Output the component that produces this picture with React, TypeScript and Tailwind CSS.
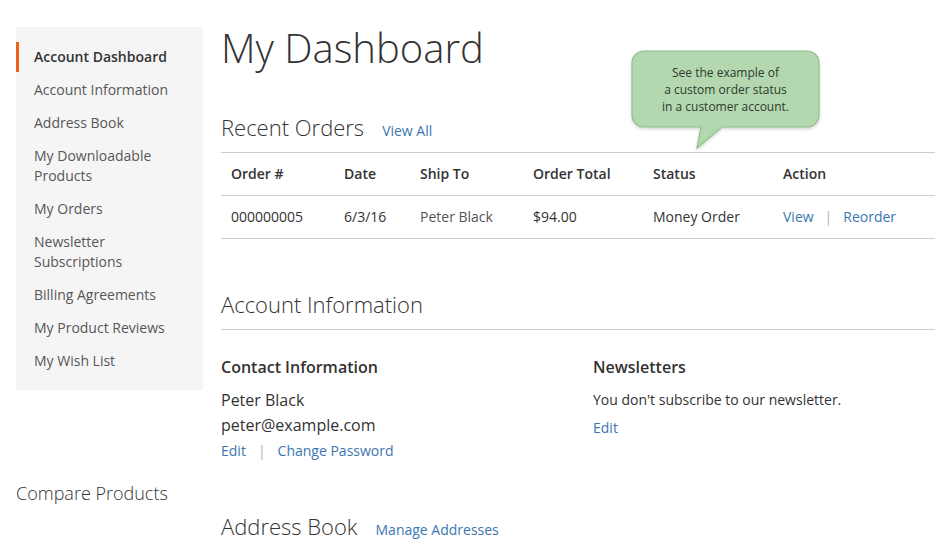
import React from "react";

const link = "text-[#3c76b1]";

function SideItem({ label, active }: { label: React.ReactNode; active?: boolean }) {
  return (
    <li className="mt-[3px]">
      <div
        className={
          "border-l-[3px] py-[5px] pl-[15px] pr-[18px] text-[14px] leading-[20px] " +
          (active ? "border-[#e8641b] font-semibold text-[#333]" : "border-transparent text-[#575757]")
        }
      >
        {label}
      </div>
    </li>
  );
}

const cols = "grid grid-cols-[113px_76px_113px_120px_130px_1fr]";

export default function App() {
  return (
    <div
      className="relative h-[545px] w-[938px] overflow-hidden bg-white text-[#333]"
      style={{ fontFamily: '"Open Sans", "Noto Sans", sans-serif' }}
    >
      <div className="flex pl-[16px] pt-[27px]">
        {/* Sidebar */}
        <div className="w-[187px] shrink-0">
          <ul className="bg-[#f5f5f5] pb-[14px] pt-[12px]">
            <SideItem label="Account Dashboard" active />
            <SideItem label="Account Information" />
            <SideItem label="Address Book" />
            <SideItem label={<>My Downloadable<br />Products</>} />
            <SideItem label="My Orders" />
            <SideItem label={<>Newsletter<br />Subscriptions</>} />
            <SideItem label="Billing Agreements" />
            <SideItem label="My Product Reviews" />
            <SideItem label="My Wish List" />
          </ul>
          <div className="mt-[91px] text-[18px] font-light leading-[24px] text-[#333]">Compare Products</div>
        </div>

        {/* Main */}
        <div className="ml-[18px] mt-[-1px] w-[714px] shrink-0">
          <h1 className="text-[40px] font-light leading-[44px] text-[#333]">My Dashboard</h1>

          <div className="mt-[43px] flex items-baseline border-b border-[#cccccc] pb-[11px]">
            <span className="text-[22px] font-light leading-[28px]">Recent Orders</span>
            <span className={"ml-[18px] text-[14px] leading-[20px] " + link}>View All</span>
          </div>

          <div className={cols + " border-b border-[#cccccc] text-[14px] font-semibold leading-[20px]"}>
            {["Order #", "Date", "Ship To", "Order Total", "Status", "Action"].map((h) => (
              <div key={h} className="px-[10px] py-[11px]">
                {h}
              </div>
            ))}
          </div>
          <div className={cols + " border-b border-[#cccccc] text-[14px] leading-[20px] text-[#333]"}>
            <div className="px-[10px] py-[11px]">000000005</div>
            <div className="px-[10px] py-[11px]">6/3/16</div>
            <div className="px-[10px] py-[11px] text-[#555]">Peter Black</div>
            <div className="px-[10px] py-[11px]">$94.00</div>
            <div className="px-[10px] py-[11px]">Money Order</div>
            <div className="flex px-[10px] py-[11px]">
              <span className={link}>View</span>
              <span className="mx-[11px] text-[#b5b5b5]">|</span>
              <span className={link}>Reorder</span>
            </div>
          </div>

          <div className="mt-[51px] border-b border-[#cccccc] pb-[11px] text-[22px] font-light leading-[28px]">
            Account Information
          </div>

          <div className="mt-[27px] grid grid-cols-[372px_1fr]">
            <div>
              <div className="text-[16px] font-semibold leading-[20px]">Contact Information</div>
              <div className="mt-[11px] text-[16px] leading-[25px] text-[#333]">
                <div>Peter Black</div>
                <div>peter@example.com</div>
              </div>
              <div className="mt-[3px] flex text-[14px] leading-[20px]">
                <span className={link}>Edit</span>
                <span className="mx-[12px] text-[#b5b5b5]">|</span>
                <span className={link}>Change Password</span>
              </div>
            </div>
            <div>
              <div className="text-[16px] font-semibold leading-[20px]">Newsletters</div>
              <div className="mt-[13px] text-[14px] leading-[20px] text-[#333]">You don't subscribe to our newsletter.</div>
              <div className={"mt-[8px] text-[14px] leading-[20px] " + link}>Edit</div>
            </div>
          </div>

          <div className="mt-[51px] flex items-baseline">
            <span className="text-[22px] font-light leading-[28px]">Address Book</span>
            <span className={"ml-[18px] text-[14px] leading-[20px] " + link}>Manage Addresses</span>
          </div>
        </div>
      </div>

      {/* Callout bubble */}
      <svg
        className="absolute left-[625px] top-[45px]"
        width="200"
        height="110"
        viewBox="0 0 200 110"
      >
        <defs>
          <filter id="sh" x="-10%" y="-10%" width="120%" height="130%">
            <feDropShadow dx="0" dy="1.5" stdDeviation="1.5" floodColor="#000" floodOpacity="0.18" />
          </filter>
        </defs>
        <path
          d="M19 6 H182 A12 12 0 0 1 194 18 V70 A12 12 0 0 1 182 82 H97 L72 103 L76 82 H19 A12 12 0 0 1 7 70 V18 A12 12 0 0 1 19 6 Z"
          fill="#b3d8b0"
          stroke="#8fbe8b"
          strokeWidth="1.2"
          filter="url(#sh)"
        />
      </svg>
      <div className="absolute left-[632px] top-[64px] w-[187px] text-center text-[12px] leading-[17px] text-[#2e3a2e]">
        See the example of
        <br />
        a custom order status
        <br />
        in a customer account.
      </div>
    </div>
  );
}
